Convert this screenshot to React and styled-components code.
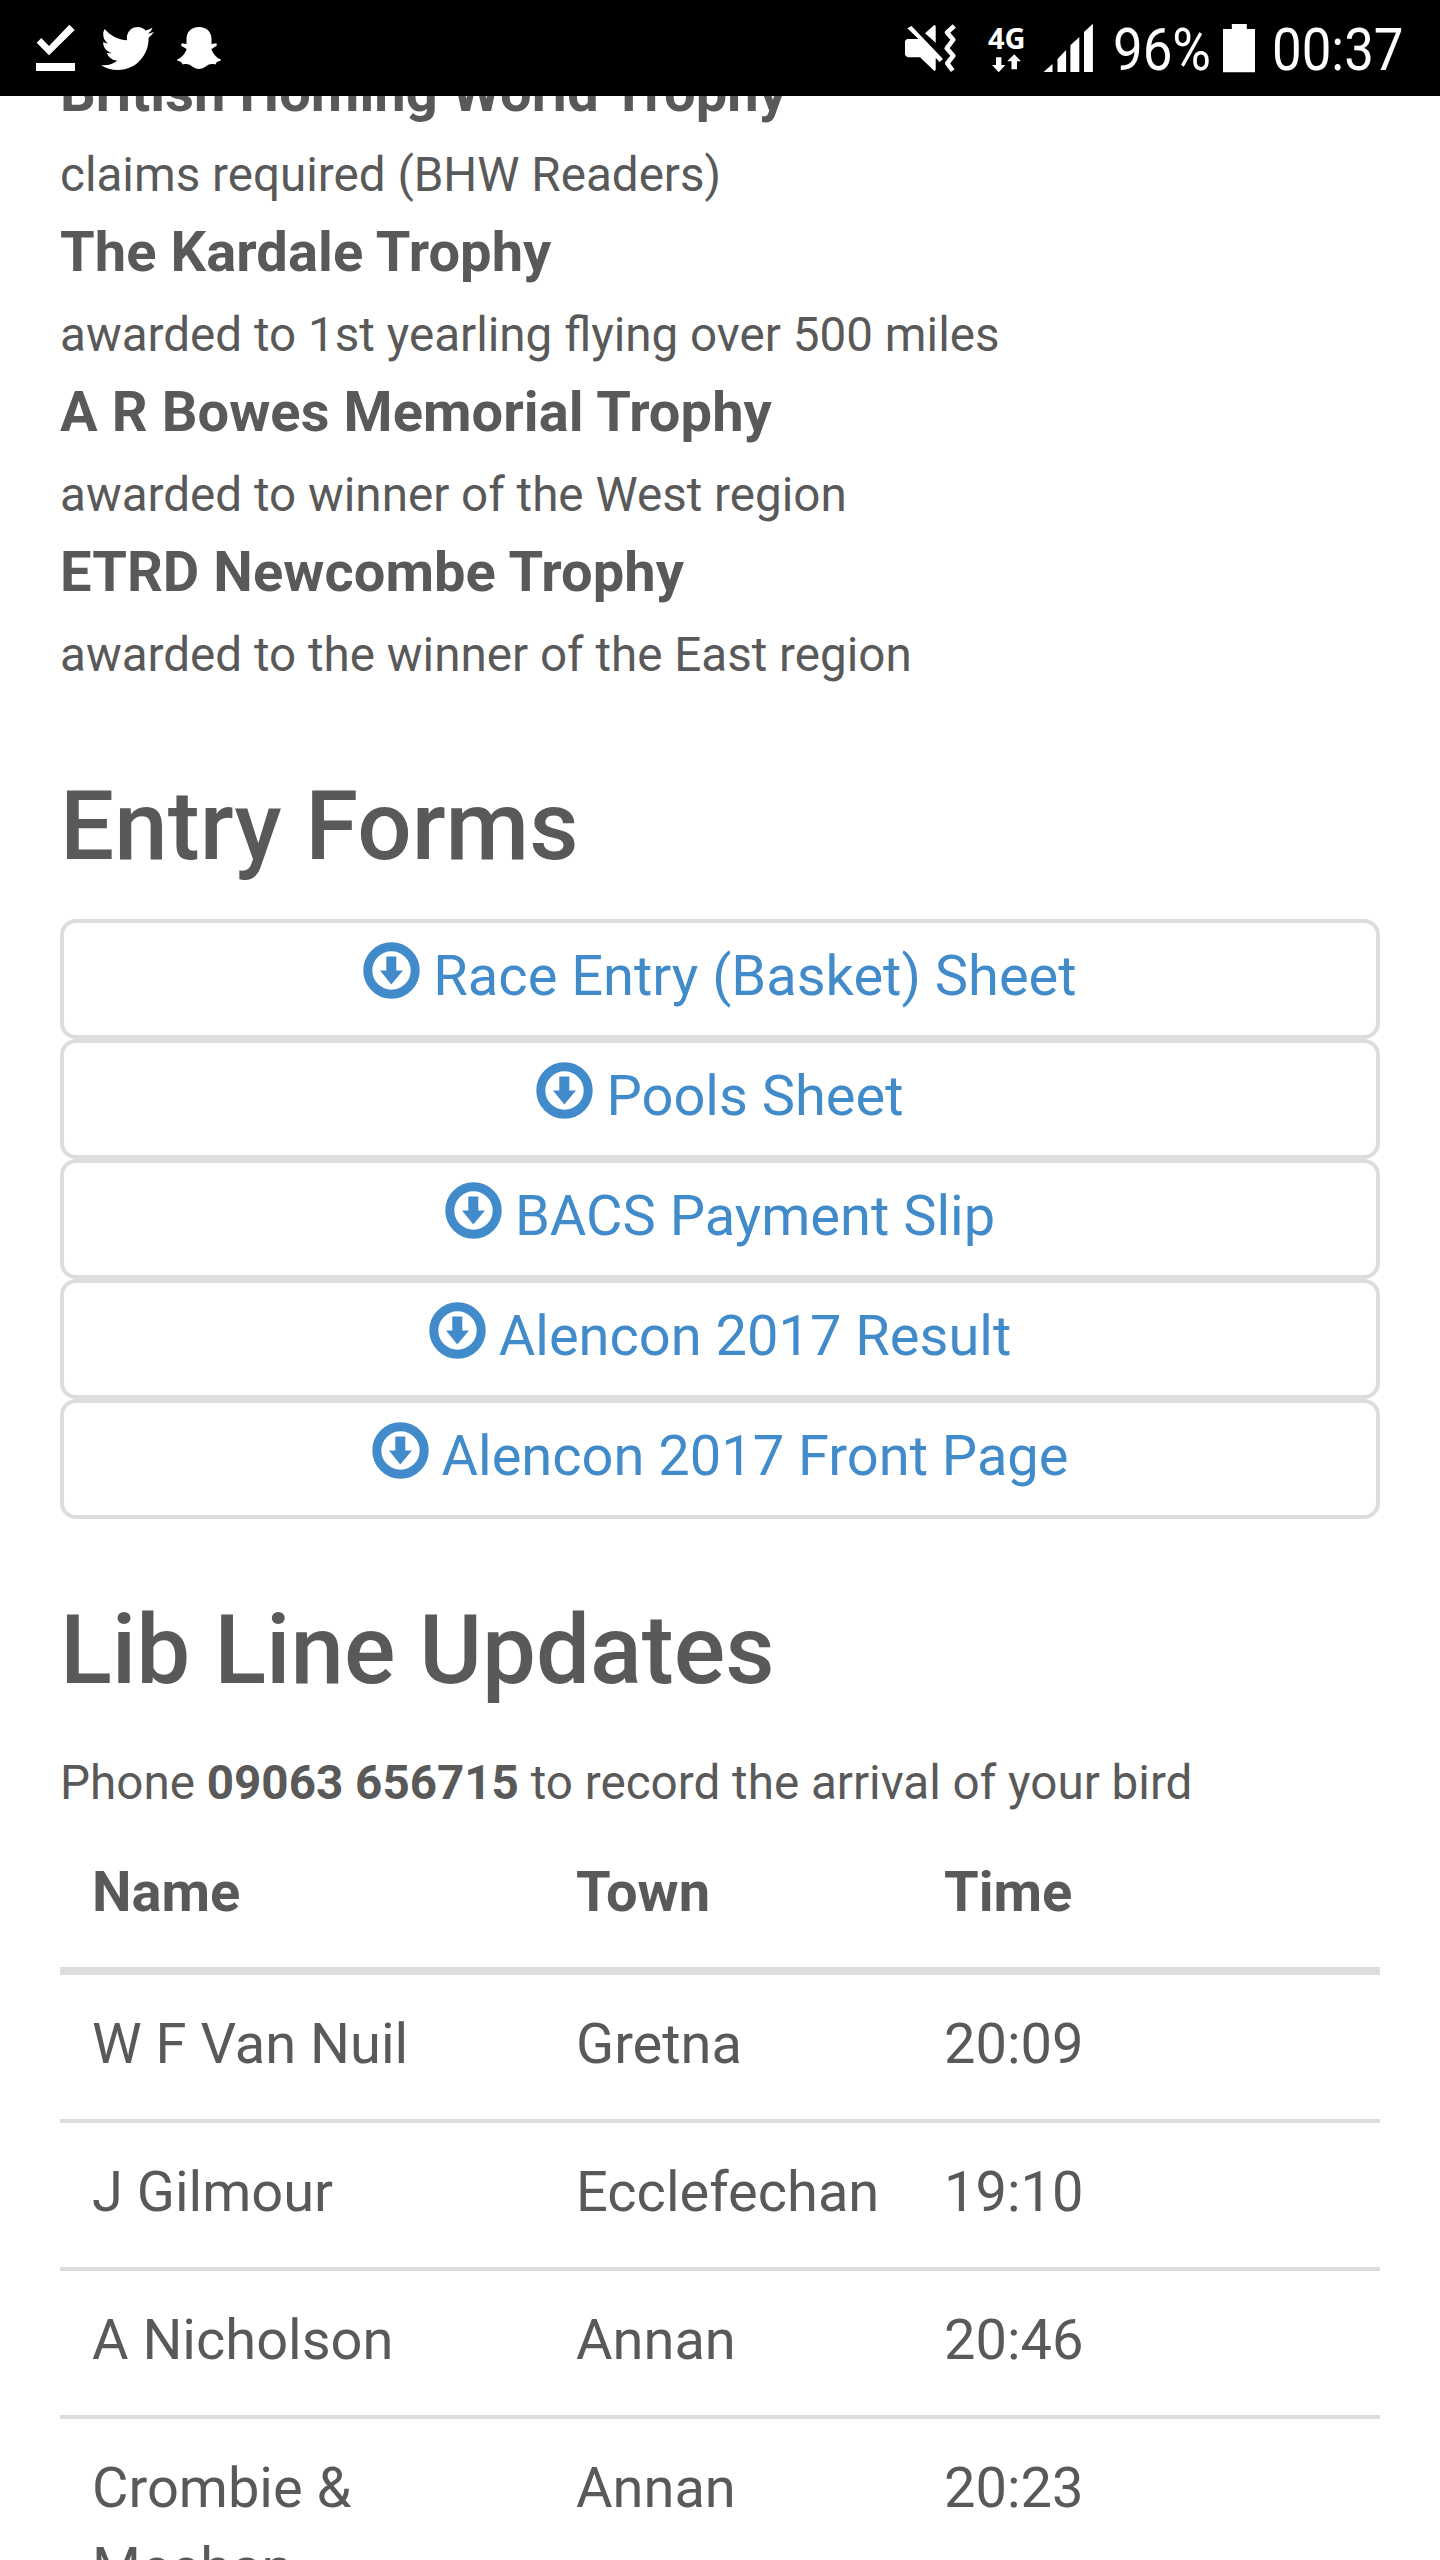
import React from "react";
import styled, { createGlobalStyle } from "styled-components";
import { FaTwitter } from "react-icons/fa";

const GlobalStyle = createGlobalStyle`
  * {
    box-sizing: border-box;
  }
  body {
    margin: 0;
    background-color: white;
    color: #595959;
    font-family: Roboto, "Liberation Sans", sans-serif;
    font-size: 56px;
    line-height: 80px;
  }
`;

const Screen = styled.div`
  display: flex;
  flex-direction: column;
  width: 1440px;
  height: 2560px;
  overflow: hidden;
`;

const StatusBar = styled.header`
  display: flex;
  justify-content: space-between;
  flex-shrink: 0;
  height: 96px;
  padding: 0 37px 0 36px;
  background-color: black;
  color: white;
`;

const StatusGroup = styled.div`
  display: flex;
  align-items: flex-start;
  height: 96px;
`;

const StatusIcon = styled.svg`
  display: block;
  height: 96px;
  width: ${(props) => props.$width}px;
  margin-left: ${(props) => props.$gap || 0}px;
  fill: white;
`;

const Bird = styled(FaTwitter)`
  width: 53px;
  height: 53px;
  margin: 22px 0 0 26px;
`;

const Network = styled.div`
  width: 38px;
  margin-left: 31px;
  padding-top: 22px;
  font-family: "Open Sans", sans-serif;
  font-size: 29px;
  font-weight: 700;
  line-height: 31px;
`;

const Arrows = styled.svg`
  display: block;
  width: 38px;
  height: 20px;
  fill: white;
`;

const StatusText = styled.div`
  width: ${(props) => props.$width}px;
  margin-left: ${(props) => props.$gap}px;
  padding-top: 10px;
  font-size: 60px;
  white-space: nowrap;
  transform: scaleX(0.88);
  transform-origin: left;
`;

const Viewport = styled.div`
  flex: 1;
  min-height: 0;
  overflow: hidden;
`;

const Page = styled.main`
  margin-top: -44px;
  padding: 0 60px;
`;

const Trophy = styled.div`
  height: 160px;
`;

const TrophyName = styled.div`
  font-weight: 700;
  letter-spacing: 0.08px;
`;

const Small = styled.div`
  font-size: 47.6px;
`;

const Note = styled(Small)`
  padding-top: 3px;
`;

const Heading = styled.h2`
  margin: ${(props) => props.$top}px 0 0;
  font-size: 96px;
  font-weight: 500;
  line-height: 106px;
`;

const Forms = styled.div`
  display: flex;
  flex-direction: column;
  margin-top: 40px;
`;

const FormLink = styled.a`
  display: flex;
  justify-content: center;
  height: 120px;
  padding-top: 13px;
  border: 4px solid #ddd;
  border-radius: 16px;
  color: #428bca;
`;

const DownloadIcon = styled.svg`
  width: 57px;
  height: 57px;
  margin: 6px 13px 0 0;
`;

const Phone = styled(Small)`
  margin-top: 40px;
`;

const Table = styled.table`
  width: 100%;
  border-collapse: separate;
  border-spacing: 0;
  table-layout: fixed;
`;

const Th = styled.th`
  width: ${(props) => props.$width}px;
  padding: 29px 32px 35px;
  border-bottom: 4px solid #ddd;
  font-weight: 700;
  text-align: left;
`;

const Td = styled.td`
  padding: 29px 32px 35px;
  border-top: 4px solid #ddd;
  vertical-align: top;
`;

const trophies = [
  { name: "British Homing World Trophy", note: "claims required (BHW Readers)" },
  {
    name: "The Kardale Trophy",
    note: "awarded to 1st yearling flying over 500 miles",
  },
  {
    name: "A R Bowes Memorial Trophy",
    note: "awarded to winner of the West region",
  },
  {
    name: "ETRD Newcombe Trophy",
    note: "awarded to the winner of the East region",
  },
];

const forms = [
  "Race Entry (Basket) Sheet",
  "Pools Sheet",
  "BACS Payment Slip",
  "Alencon 2017 Result",
  "Alencon 2017 Front Page",
];

const updates = [
  { name: "W F Van Nuil", town: "Gretna", time: "20:09" },
  { name: "J Gilmour", town: "Ecclefechan", time: "19:10" },
  { name: "A Nicholson", town: "Annan", time: "20:46" },
  { name: "Crombie & Meehan", town: "Annan", time: "20:23" },
];

const Download = () => (
  <DownloadIcon viewBox="0 0 57 57">
    <circle
      cx="28.5"
      cy="28.5"
      r="23.7"
      fill="none"
      stroke="#428bca"
      strokeWidth="9"
    />
    <path d="M23.3 14.5h10v14H40L28.3 42.5 17 28.5h6.3z" fill="#428bca" />
  </DownloadIcon>
);

const Status = () => (
  <StatusBar>
    <StatusGroup>
      <StatusIcon $width={39} viewBox="36 0 39 96">
        <path d="M36.7 42.7 41.3 38 49 46 69.3 24.7 74.7 30 49 55.3zM36 63h39v8H36z" />
      </StatusIcon>
      <Bird />
      <StatusIcon $width={46} $gap={22} viewBox="176 0 46 96">
        <path d="M199 27c8 0 12.500 5 12.500 12v5l5-.8.3 2.500-5.400 3.300c1.500 4.500 4.500 8.500 9.600 10.500l-.2 1-4 1.500-1.500 2.500c-5-1-7 0-10.300 2.500q-6 4-12 0c-3.300-2.500-5.300-3.500-10.300-2.500l-1.500-2.500-4-1.500-.2-1c5.100-2 8.100-6 9.600-10.500l-5.400-3.300.3-2.500 5 .8v-5c0-7 4.500-12 12.500-12z" />
      </StatusIcon>
    </StatusGroup>
    <StatusGroup>
      <StatusIcon $width={52} viewBox="905 0 52 96">
        <path d="M907.300 28.300 911.500 26 943 59l-3.300 3-4-4v12l-1.400 1L920 57.300h-12.500L905 55V41l2-2h11.500z" />
        <path d="M925 33.300 934.300 25l1.400.7v17z" />
        <path
          d="M954.300 26 947 32.500l6.300 7.200-6.600 8.600 6.600 7.400-6 7.600 5.400 7.400"
          fill="none"
          stroke="white"
          strokeWidth="4.6"
          strokeLinejoin="round"
        />
      </StatusIcon>
      <Network>
        4G
        <Arrows viewBox="988 53 38 20">
          <path d="M996 57.300h5.400V65h4l-6.700 7.300L992 65h4zM1014.300 54.300l6.700 7h-4v8h-5.500v-8h-4.300z" />
        </Arrows>
      </Network>
      <StatusIcon $width={50} $gap={17} viewBox="1043 0 50 96">
        <path d="M1043.600 72h8.900v-8zM1057.500 72V59l8.600-9v22zM1070.400 72V45.300l8.900-8.300v35zM1084 72V32l8.900-8.300V72z" />
      </StatusIcon>
      <StatusText $width={93} $gap={20}>96%</StatusText>
      <StatusIcon $width={33} $gap={16} viewBox="1222 0 33 96">
        <path d="M1223 29h8.800v-5h15v5h8.200v43.300h-32z" />
      </StatusIcon>
      <StatusText $width={131} $gap={17}>00:37</StatusText>
    </StatusGroup>
  </StatusBar>
);

const App = () => {
  return (
    <>
      <GlobalStyle />
      <Screen>
        <Status />
        <Viewport>
          <Page>
            {trophies.map((trophy) => (
              <Trophy key={trophy.name}>
                <TrophyName>{trophy.name}</TrophyName>
                <Note>{trophy.note}</Note>
              </Trophy>
            ))}
            <Heading $top={81}>Entry Forms</Heading>
            <Forms>
              {forms.map((form) => (
                <FormLink key={form}>
                  <Download />
                  {form}
                </FormLink>
              ))}
            </Forms>
            <Heading $top={78}>Lib Line Updates</Heading>
            <Phone>
              Phone <b>09063 656715</b> to record the arrival of your bird
            </Phone>
            <Table>
              <thead>
                <tr>
                  <Th $width={484}>Name</Th>
                  <Th $width={368}>Town</Th>
                  <Th>Time</Th>
                </tr>
              </thead>
              <tbody>
                {updates.map((row) => (
                  <tr key={row.name}>
                    <Td>{row.name}</Td>
                    <Td>{row.town}</Td>
                    <Td>{row.time}</Td>
                  </tr>
                ))}
              </tbody>
            </Table>
          </Page>
        </Viewport>
      </Screen>
    </>
  );
};

export default App;
